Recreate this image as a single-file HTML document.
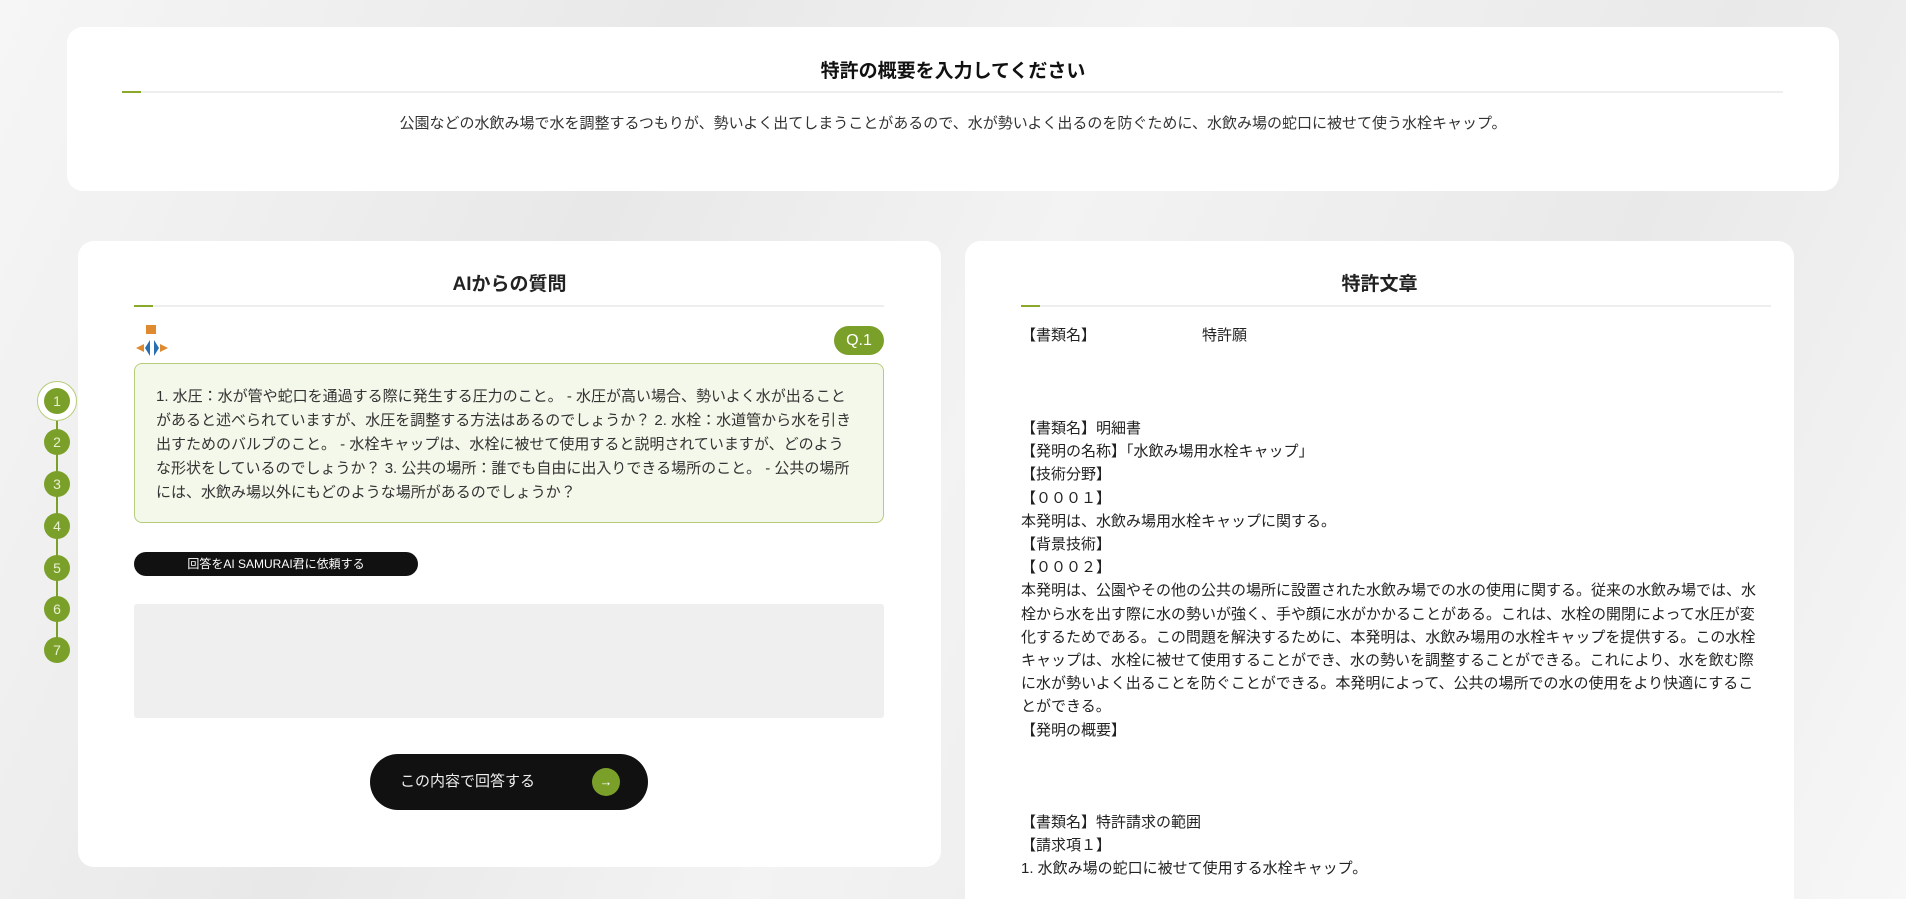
<!DOCTYPE html>
<html><head><meta charset="utf-8"><style>
*{box-sizing:border-box;margin:0;padding:0}
html,body{width:1906px;height:899px;overflow:hidden}
body{background:#ececec;font-family:"Liberation Sans","Noto Sans CJK JP",sans-serif;color:#222;position:relative}
.bg{position:absolute;left:0;top:0;width:1906px;height:899px;background:linear-gradient(115deg,#f6f6f6 0%,#e8e8e8 30%,#f3f3f3 50%,#e9e9e9 75%,#f7f7f7 100%)}
.card{position:absolute;background:#fff;border-radius:16px}
.title{position:absolute;left:0;right:0;text-align:center;font-weight:bold;font-size:19px;color:#111}
.line{position:absolute;height:2px;background:#eee}
.line:before{content:"";position:absolute;left:0;top:0;width:19px;height:2px;background:#8aa82a}
.circ{position:absolute;left:44px;width:26px;height:26px;border-radius:50%;background:#7ba02a;color:#e8f0d0;font-size:14px;text-align:center;line-height:26px}
.vline{position:absolute;left:56px;top:401px;width:2px;height:250px;background:#7ba02a}
.rt{position:absolute;left:1021px;font-size:15px;line-height:23.2px;width:746px;color:#222}
</style></head><body>
<div class="bg"></div>
<div class="card" style="left:67px;top:27px;width:1772px;height:164px"></div>
<div class="title" style="top:56px">特許の概要を入力してください</div>
<div class="line" style="left:122px;top:91px;width:1661px"></div>
<div style="position:absolute;left:0;right:0;top:112px;text-align:center;font-size:15px;color:#333">公園などの水飲み場で水を調整するつもりが、勢いよく出てしまうことがあるので、水が勢いよく出るのを防ぐために、水飲み場の蛇口に被せて使う水栓キャップ。</div>

<div class="card" style="left:78px;top:241px;width:863px;height:626px"></div>
<div style="position:absolute;left:78px;width:863px;top:269px;text-align:center;font-weight:bold;font-size:19px">AIからの質問</div>
<div class="line" style="left:134px;top:305px;width:750px"></div>
<svg style="position:absolute;left:132px;top:324px" width="40" height="40" viewBox="0 0 40 40"><rect x="14" y="1" width="10" height="9" fill="#e08a30"/><path d="M13 24 L18 16 L18 32 Z" fill="#2a6fb0"/><path d="M27 24 L22 16 L22 32 Z" fill="#2a6fb0"/><path d="M4 24 L12 20 L12 28Z" fill="#e08a30"/><path d="M36 24 L28 20 L28 28Z" fill="#e08a30"/></svg>
<div style="position:absolute;left:834px;top:326px;width:50px;height:29px;border-radius:15px;background:#7ba02a;color:#fff;font-size:16px;text-align:center;line-height:29px">Q.1</div>
<div style="position:absolute;left:134px;top:363px;width:750px;height:160px;border:1.5px solid #b6cc7a;border-radius:8px;background:#f4f8ea;padding:21px 30px 0 21px;font-size:15px;line-height:24px;color:#333">1. 水圧：水が管や蛇口を通過する際に発生する圧力のこと。 - 水圧が高い場合、勢いよく水が出ることがあると述べられていますが、水圧を調整する方法はあるのでしょうか？ 2. 水栓：水道管から水を引き出すためのバルブのこと。 - 水栓キャップは、水栓に被せて使用すると説明されていますが、どのような形状をしているのでしょうか？ 3. 公共の場所：誰でも自由に出入りできる場所のこと。 - 公共の場所には、水飲み場以外にもどのような場所があるのでしょうか？</div>
<div style="position:absolute;left:134px;top:552px;width:284px;height:24px;border-radius:12px;background:#111;color:#fff;font-size:12px;text-align:center;line-height:24px">回答をAI SAMURAI君に依頼する</div>
<div style="position:absolute;left:134px;top:604px;width:750px;height:114px;background:#efefef;border-radius:3px"></div>
<div style="position:absolute;left:370px;top:754px;width:278px;height:56px;border-radius:28px;background:#111;color:#eee;font-size:15px;line-height:56px;padding-left:30px">この内容で回答する<span style="position:absolute;right:28px;top:14px;width:28px;height:28px;border-radius:50%;background:#7ba02a;color:#fff;text-align:center;line-height:28px;font-size:13px">→</span></div>

<div class="vline"></div>
<div style="position:absolute;left:37px;top:381px;width:40px;height:40px;border-radius:50%;border:1.5px solid #b6cc7a;background:#fff"></div>
<div class="circ" style="top:388px">1</div>
<div class="circ" style="top:429px">2</div>
<div class="circ" style="top:471px">3</div>
<div class="circ" style="top:513px">4</div>
<div class="circ" style="top:555px">5</div>
<div class="circ" style="top:596px">6</div>
<div class="circ" style="top:637px">7</div>

<div class="card" style="left:965px;top:241px;width:829px;height:680px"></div>
<div style="position:absolute;left:965px;width:829px;top:269px;text-align:center;font-weight:bold;font-size:19px">特許文章</div>
<div class="line" style="left:1021px;top:305px;width:750px"></div>
<div class="rt" style="top:324px">【書類名】<span style="position:absolute;left:181px">特許願</span></div>
<div class="rt" style="top:417px">【書類名】明細書<br>【発明の名称】「水飲み場用水栓キャップ」<br>【技術分野】<br>【０００１】<br>本発明は、水飲み場用水栓キャップに関する。<br>【背景技術】<br>【０００２】<br>本発明は、公園やその他の公共の場所に設置された水飲み場での水の使用に関する。従来の水飲み場では、水栓から水を出す際に水の勢いが強く、手や顔に水がかかることがある。これは、水栓の開閉によって水圧が変化するためである。この問題を解決するために、本発明は、水飲み場用の水栓キャップを提供する。この水栓キャップは、水栓に被せて使用することができ、水の勢いを調整することができる。これにより、水を飲む際に水が勢いよく出ることを防ぐことができる。本発明によって、公共の場所での水の使用をより快適にすることができる。<br>【発明の概要】</div>
<div class="rt" style="top:811px">【書類名】特許請求の範囲<br>【請求項１】<br>1. 水飲み場の蛇口に被せて使用する水栓キャップ。</div>
</body></html>
